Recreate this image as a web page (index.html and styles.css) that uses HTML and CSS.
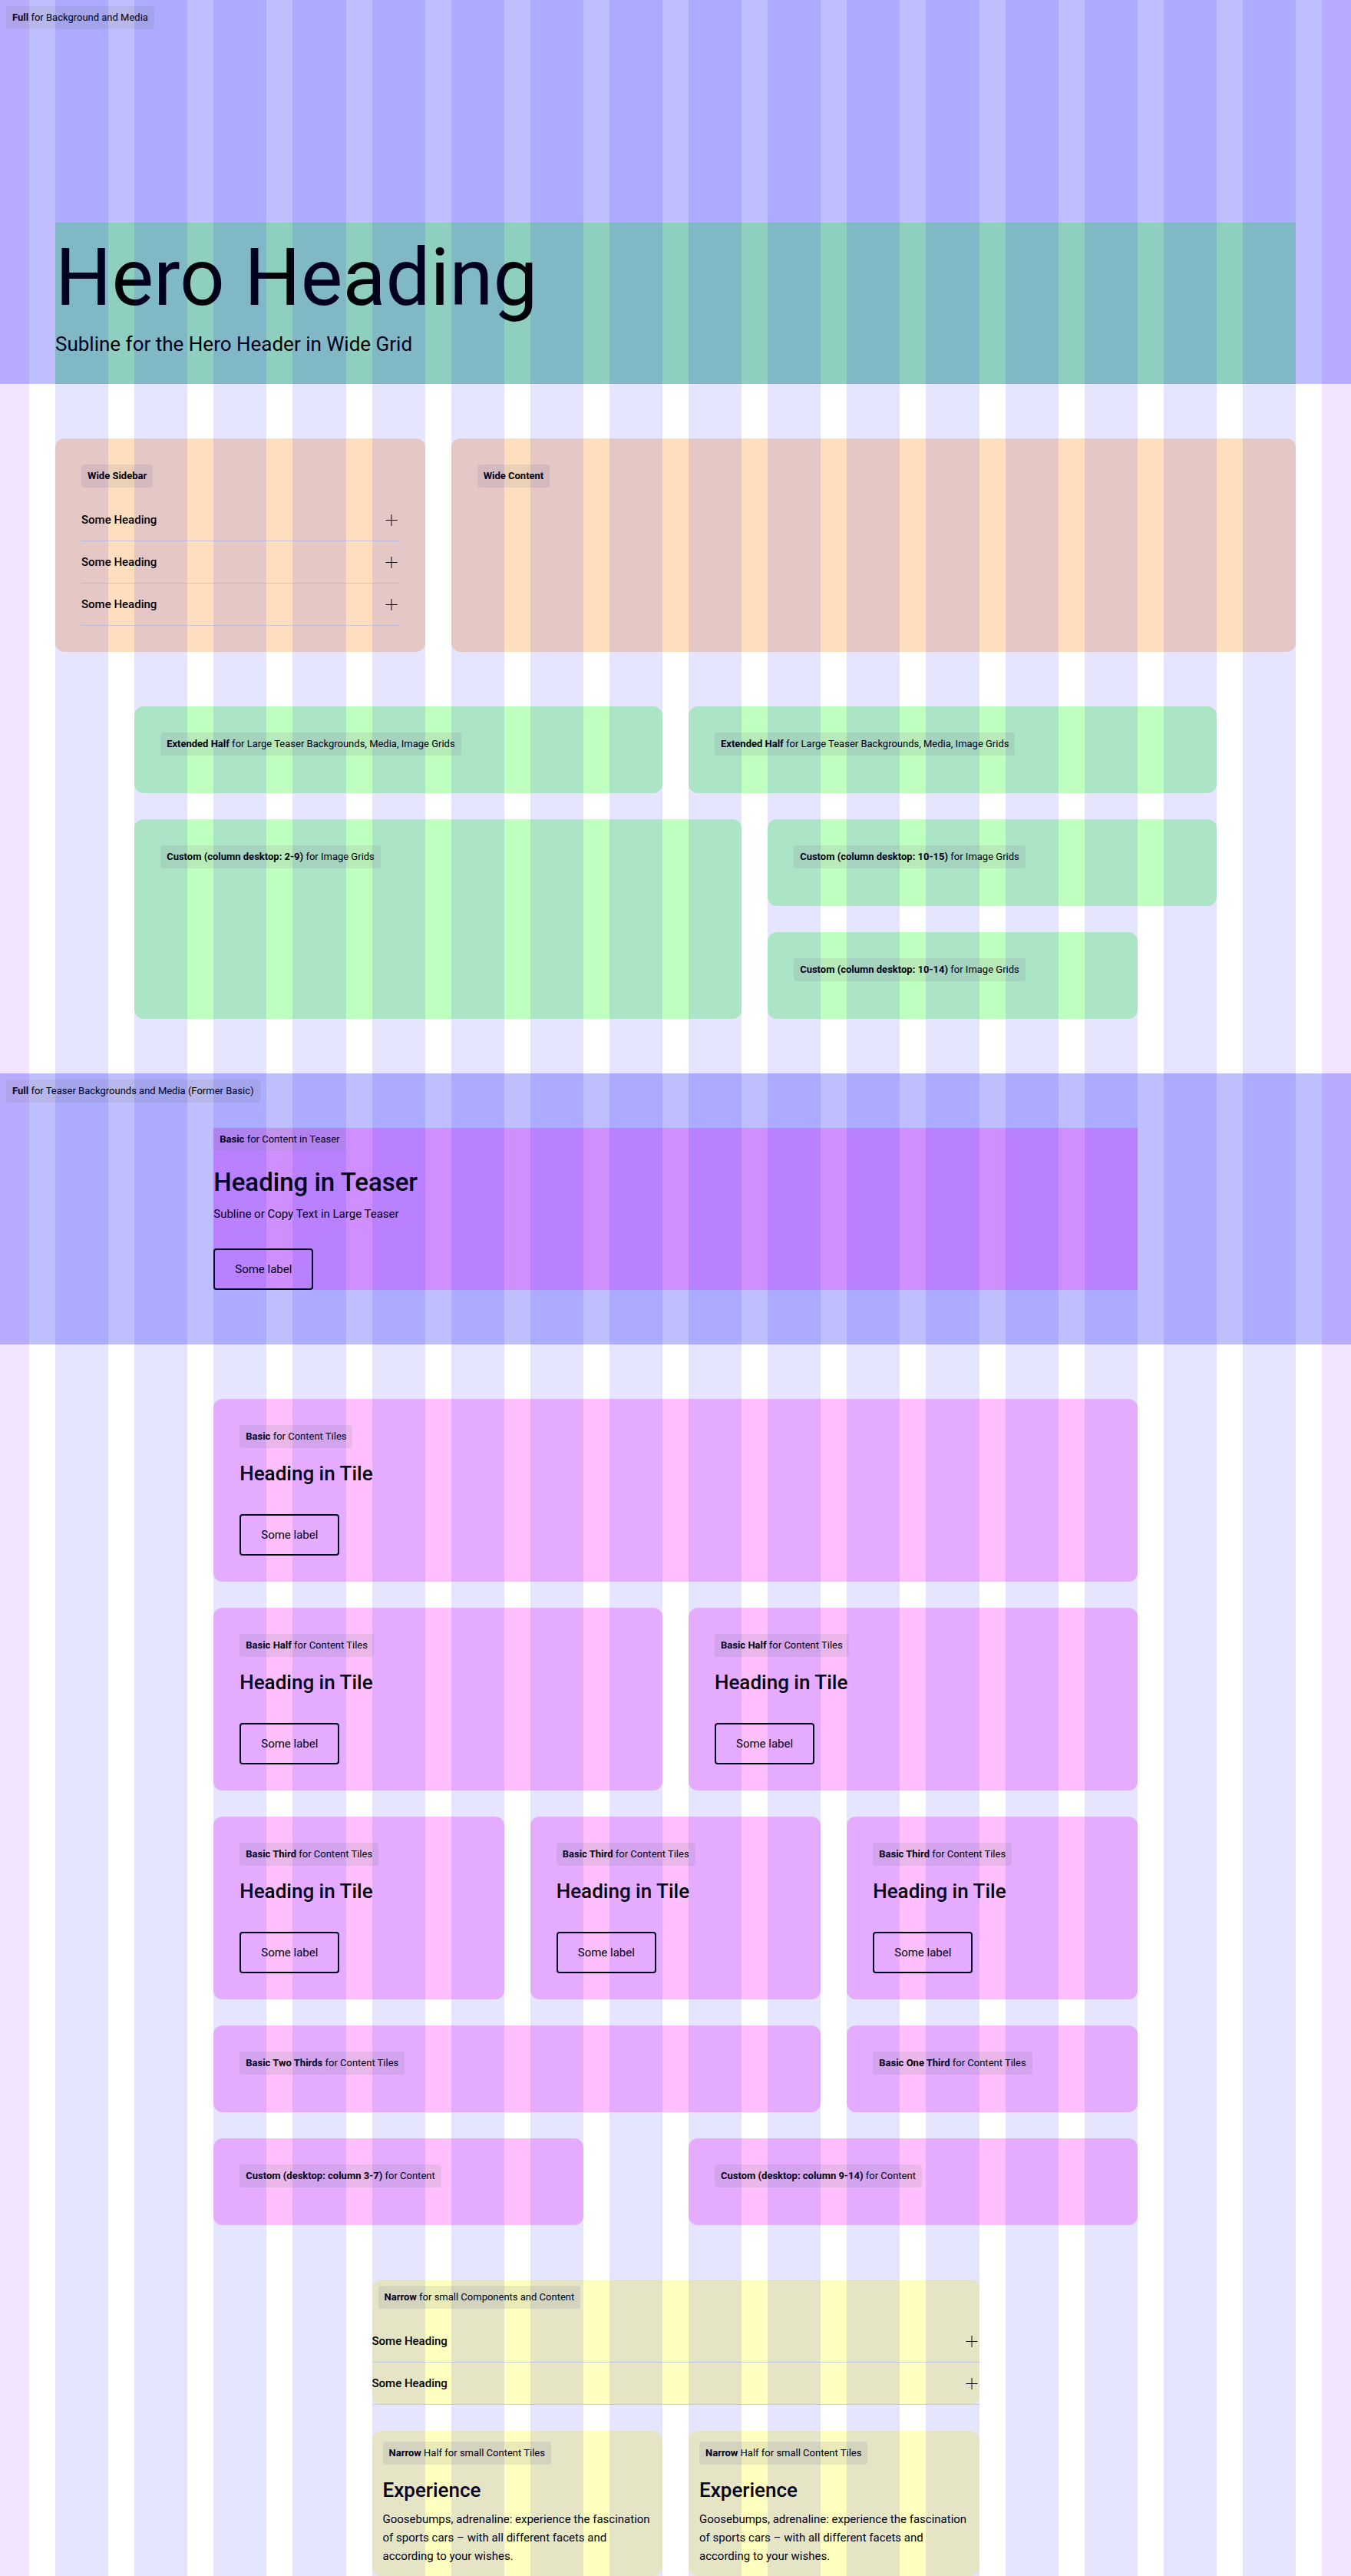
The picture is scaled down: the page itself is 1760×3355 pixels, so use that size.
FILE: index.html
```html
<!DOCTYPE html>
<html lang="en">
<head>
<meta charset="utf-8">
<meta name="viewport" content="width=device-width, initial-scale=1">
<title>Grid</title>
<link rel="stylesheet" href="styles.css">
</head>
<body>
<div class="page">
  <header class="grid full">
    <span class="badge corner"><b>Full</b> for Background and Media</span>
    <div class="hero wide">
      <h1 class="hero-title">Hero Heading</h1>
      <p class="hero-subline">Subline for the Hero Header in Wide Grid</p>
    </div>
  </header>

  <main class="sections">
    <section class="grid">
      <aside class="card orange c1-5">
        <span class="badge"><b>Wide Sidebar</b></span>
        <div class="accordion">
          <button class="accordion-item" type="button" aria-expanded="false">Some Heading
            <svg class="plus" viewBox="0 0 20 20" aria-hidden="true"><path d="M2.5 10.5h15M10 3v15"/></svg></button>
          <button class="accordion-item" type="button" aria-expanded="false">Some Heading
            <svg class="plus" viewBox="0 0 20 20" aria-hidden="true"><path d="M2.5 10.5h15M10 3v15"/></svg></button>
          <button class="accordion-item" type="button" aria-expanded="false">Some Heading
            <svg class="plus" viewBox="0 0 20 20" aria-hidden="true"><path d="M2.5 10.5h15M10 3v15"/></svg></button>
        </div>
      </aside>
      <div class="card orange c6-16"><span class="badge"><b>Wide Content</b></span></div>
    </section>

    <section class="grid">
      <div class="card green c2-8"><span class="badge"><b>Extended Half</b> for Large Teaser Backgrounds, Media, Image Grids</span></div>
      <div class="card green c9-15"><span class="badge"><b>Extended Half</b> for Large Teaser Backgrounds, Media, Image Grids</span></div>
      <div class="card green c2-9 two-rows"><span class="badge"><b>Custom (column desktop: 2-9)</b> for Image Grids</span></div>
      <div class="card green c10-15"><span class="badge"><b>Custom (column desktop: 10-15)</b> for Image Grids</span></div>
      <div class="card green c10-14"><span class="badge"><b>Custom (column desktop: 10-14)</b> for Image Grids</span></div>
    </section>

    <section class="grid full teaser">
      <span class="badge corner"><b>Full</b> for Teaser Backgrounds and Media (Former Basic)</span>
      <div class="teaser-content c3-14">
        <span class="badge"><b>Basic</b> for Content in Teaser</span>
        <h2 class="teaser-title">Heading in Teaser</h2>
        <p class="teaser-text">Subline or Copy Text in Large Teaser</p>
        <button class="button" type="button">Some label</button>
      </div>
    </section>

    <section class="grid">
      <article class="card pink c3-14">
        <span class="badge"><b>Basic</b> for Content Tiles</span>
        <h3 class="tile-title">Heading in Tile</h3>
        <button class="button" type="button">Some label</button>
      </article>
      <article class="card pink c3-8">
        <span class="badge"><b>Basic Half</b> for Content Tiles</span>
        <h3 class="tile-title">Heading in Tile</h3>
        <button class="button" type="button">Some label</button>
      </article>
      <article class="card pink c9-14">
        <span class="badge"><b>Basic Half</b> for Content Tiles</span>
        <h3 class="tile-title">Heading in Tile</h3>
        <button class="button" type="button">Some label</button>
      </article>
      <article class="card pink c3-6">
        <span class="badge"><b>Basic Third</b> for Content Tiles</span>
        <h3 class="tile-title">Heading in Tile</h3>
        <button class="button" type="button">Some label</button>
      </article>
      <article class="card pink c7-10">
        <span class="badge"><b>Basic Third</b> for Content Tiles</span>
        <h3 class="tile-title">Heading in Tile</h3>
        <button class="button" type="button">Some label</button>
      </article>
      <article class="card pink c11-14">
        <span class="badge"><b>Basic Third</b> for Content Tiles</span>
        <h3 class="tile-title">Heading in Tile</h3>
        <button class="button" type="button">Some label</button>
      </article>
      <div class="card pink c3-10"><span class="badge"><b>Basic Two Thirds</b> for Content Tiles</span></div>
      <div class="card pink c11-14"><span class="badge"><b>Basic One Third</b> for Content Tiles</span></div>
      <div class="card pink c3-7"><span class="badge"><b>Custom (desktop: column 3-7)</b> for Content</span></div>
      <div class="card pink c9-14"><span class="badge"><b>Custom (desktop: column 9-14)</b> for Content</span></div>
    </section>

    <section class="grid">
      <div class="card yellow flush c5-12">
        <span class="badge inset"><b>Narrow</b> for small Components and Content</span>
        <div class="accordion">
          <button class="accordion-item" type="button" aria-expanded="false">Some Heading
            <svg class="plus" viewBox="0 0 20 20" aria-hidden="true"><path d="M2.5 10.5h15M10 3v15"/></svg></button>
          <button class="accordion-item" type="button" aria-expanded="false">Some Heading
            <svg class="plus" viewBox="0 0 20 20" aria-hidden="true"><path d="M2.5 10.5h15M10 3v15"/></svg></button>
        </div>
      </div>
      <article class="card yellow small c5-8">
        <span class="badge"><b>Narrow</b> Half for small Content Tiles</span>
        <h3 class="tile-title">Experience</h3>
        <p class="tile-text">Goosebumps, adrenaline: experience the fascination of sports cars – with all different facets and according to your wishes.</p>
      </article>
      <article class="card yellow small c9-12">
        <span class="badge"><b>Narrow</b> Half for small Content Tiles</span>
        <h3 class="tile-title">Experience</h3>
        <p class="tile-text">Goosebumps, adrenaline: experience the fascination of sports cars – with all different facets and according to your wishes.</p>
      </article>
    </section>
  </main>

  <div class="grid overlay" aria-hidden="true">
    <i class="edge"></i>
    <i></i><i></i><i></i><i></i><i></i><i></i><i></i><i></i>
    <i></i><i></i><i></i><i></i><i></i><i></i><i></i><i></i>
    <i class="edge"></i>
  </div>
</div>
</body>
</html>
```

FILE: styles.css
```css
:root {
  --gap: 34px;
  --edge: 38px;
  --section: 71px;
}

* { box-sizing: border-box; }

body {
  margin: 0;
  background: #fff;
  color: #010205;
  font-family: "Roboto", "Liberation Sans", sans-serif;
  font-size: 15px;
  line-height: 24px;
}

h1, h2, h3, p { margin: 0; }

.page { position: relative; }

.grid {
  display: grid;
  grid-template-columns: var(--edge) repeat(16, minmax(0, 1fr)) var(--edge);
  gap: var(--gap);
}

.sections {
  display: flex;
  flex-direction: column;
  gap: var(--section);
  padding-top: var(--section);
}

/* Column spans, named after the 16 content columns */
.wide { grid-column: 2 / 18; }
.c1-5 { grid-column: 2 / 7; }
.c6-16 { grid-column: 7 / 18; }
.c2-8 { grid-column: 3 / 10; }
.c9-15 { grid-column: 10 / 17; }
.c2-9 { grid-column: 3 / 11; }
.c10-15 { grid-column: 11 / 17; }
.c10-14 { grid-column: 11 / 16; }
.c3-14 { grid-column: 4 / 16; }
.c3-8 { grid-column: 4 / 10; }
.c9-14 { grid-column: 10 / 16; }
.c3-6 { grid-column: 4 / 8; }
.c7-10 { grid-column: 8 / 12; }
.c11-14 { grid-column: 12 / 16; }
.c3-10 { grid-column: 4 / 12; }
.c3-7 { grid-column: 4 / 9; }
.c5-12 { grid-column: 6 / 14; }
.c5-8 { grid-column: 6 / 10; }
.c9-12 { grid-column: 10 / 14; }
.two-rows { grid-row: span 2; }

/* Full-width areas */
.full {
  position: relative;
  background: rgba(0, 0, 255, 0.25);
}

.hero {
  margin-top: 290px;
  padding-bottom: 38px;
  background: rgba(0, 255, 0, 0.25);
}

.hero-title {
  font-size: 103px;
  font-weight: 400;
  line-height: 144px;
}

.hero-subline {
  font-size: 26px;
  line-height: 28px;
}

.teaser { padding: var(--section) 0; }

.teaser-content {
  display: flex;
  flex-direction: column;
  align-items: flex-start;
  background: rgba(255, 0, 255, 0.25);
}

.teaser-title {
  margin-top: 17px;
  font-size: 33px;
  font-weight: 500;
  line-height: 48px;
}

.teaser-text {
  margin-top: 5px;
  margin-bottom: 33px;
}

/* Cards */
.card {
  display: flex;
  flex-direction: column;
  align-items: flex-start;
  padding: var(--gap);
  border-radius: 12px;
}

.card > .badge { margin-bottom: 15px; }

.orange { background: rgba(255, 122, 0, 0.25); }
.green { background: rgba(0, 255, 0, 0.25); }
.pink { background: rgba(255, 0, 255, 0.25); }
.yellow { background: rgba(255, 255, 0, 0.25); }

.flush { padding: 0; }
.small { padding: 14px; }

.tile-title {
  font-size: 26px;
  font-weight: 500;
  line-height: 36px;
}

.card > .button { margin-top: 35px; }
.tile-text { margin-top: 8px; }

.badge {
  padding: 4px 8px;
  border-radius: 4px;
  background: rgba(155, 155, 155, 0.2);
  font-size: 13px;
  line-height: 22px;
  white-space: nowrap;
}

.corner {
  position: absolute;
  top: 8px;
  left: 8px;
}

.inset {
  margin-top: 8px;
  margin-left: 8px;
}

.button {
  height: 54px;
  padding: 0 26px;
  border: 2px solid #010205;
  border-radius: 4px;
  background: none;
  color: #010205;
  font: inherit;
}

/* Accordion, kept above the column overlay */
.accordion {
  position: relative;
  z-index: 2;
  align-self: stretch;
}

.accordion-item {
  display: flex;
  align-items: center;
  justify-content: space-between;
  width: 100%;
  height: 55px;
  padding: 0;
  border: 0;
  border-bottom: 1px solid rgba(160, 175, 235, 0.55);
  background: none;
  color: #010205;
  font: inherit;
  font-weight: 500;
  text-align: left;
}

.plus {
  width: 20px;
  height: 20px;
  fill: none;
  stroke: #010205;
}

/* Column overlay */
.overlay {
  position: absolute;
  inset: 0;
  z-index: 1;
  pointer-events: none;
}

.overlay i { background: rgba(0, 0, 255, 0.1); }
.overlay .edge { background: rgba(128, 0, 255, 0.1); }
```
